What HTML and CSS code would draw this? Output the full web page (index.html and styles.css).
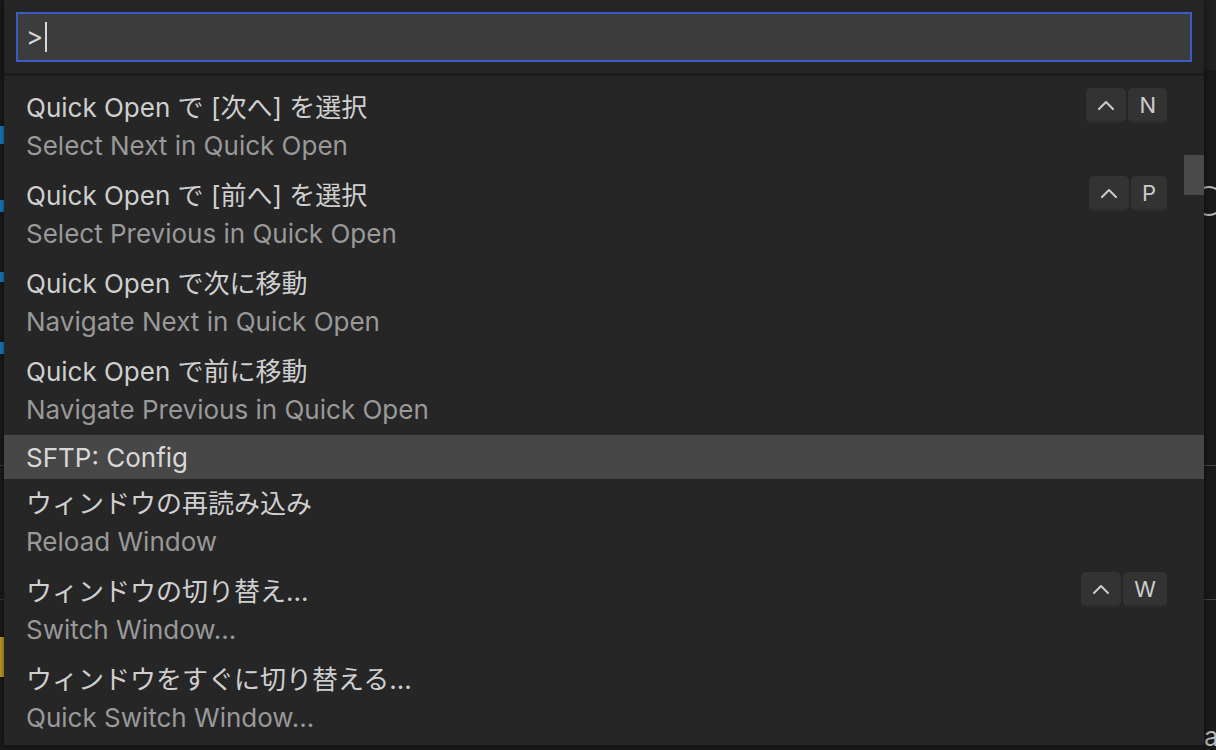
FILE: index.html
```html
<!DOCTYPE html>
<html lang="ja">
<head>
<meta charset="utf-8">
<title>Command Palette</title>
<link rel="stylesheet" href="styles.css">
</head>
<body>
<div class="workbench">
  <div class="editor-bg">
    <div class="deco deco-top"></div>
    <div class="deco mark m1"></div>
    <div class="deco mark m2"></div>
    <div class="deco mark m3"></div>
    <div class="deco mark m4"></div>
    <div class="deco rule r1"></div>
    <div class="deco rule r2"></div>
    <div class="deco rule r3"></div>
    <div class="deco rule r4"></div>
    <div class="deco yellow"></div>
    <div class="deco arc"></div>
    <div class="deco glyph-a">a</div>
  </div>

  <div class="quick-input">
    <div class="qi-header">
      <div class="qi-box">
        <span class="qi-value">&gt;</span><span class="qi-caret"></span>
      </div>
    </div>
    <div class="qi-list">
      <div class="qi-item">
        <div class="qi-row">
          <span class="qi-label">Quick Open で [次へ] を選択</span>
          <span class="qi-keys"><kbd class="key"><svg class="ctrl" viewBox="0 0 18 10"><polyline points="2,9 9,2 16,9"/></svg></kbd><kbd class="key">N</kbd></span>
        </div>
        <div class="qi-detail">Select Next in Quick Open</div>
      </div>
      <div class="qi-item">
        <div class="qi-row">
          <span class="qi-label">Quick Open で [前へ] を選択</span>
          <span class="qi-keys"><kbd class="key"><svg class="ctrl" viewBox="0 0 18 10"><polyline points="2,9 9,2 16,9"/></svg></kbd><kbd class="key">P</kbd></span>
        </div>
        <div class="qi-detail">Select Previous in Quick Open</div>
      </div>
      <div class="qi-item">
        <div class="qi-row">
          <span class="qi-label">Quick Open で次に移動</span>
        </div>
        <div class="qi-detail">Navigate Next in Quick Open</div>
      </div>
      <div class="qi-item">
        <div class="qi-row">
          <span class="qi-label">Quick Open で前に移動</span>
        </div>
        <div class="qi-detail">Navigate Previous in Quick Open</div>
      </div>
      <div class="qi-item single focused">
        <div class="qi-row">
          <span class="qi-label">SFTP: Config</span>
        </div>
      </div>
      <div class="qi-item">
        <div class="qi-row">
          <span class="qi-label">ウィンドウの再読み込み</span>
        </div>
        <div class="qi-detail">Reload Window</div>
      </div>
      <div class="qi-item">
        <div class="qi-row">
          <span class="qi-label">ウィンドウの切り替え...</span>
          <span class="qi-keys"><kbd class="key"><svg class="ctrl" viewBox="0 0 18 10"><polyline points="2,9 9,2 16,9"/></svg></kbd><kbd class="key">W</kbd></span>
        </div>
        <div class="qi-detail">Switch Window...</div>
      </div>
      <div class="qi-item">
        <div class="qi-row">
          <span class="qi-label">ウィンドウをすぐに切り替える...</span>
        </div>
        <div class="qi-detail">Quick Switch Window...</div>
      </div>
      <div class="qi-slider"></div>
    </div>
  </div>
</div>
</body>
</html>
```

FILE: styles.css
```css
* { box-sizing: border-box; }

html, body {
  margin: 0;
  padding: 0;
  width: 1216px;
  height: 750px;
  overflow: hidden;
  background: #1b1b1b;
  font-family: "Inter", "Noto Sans CJK JP", sans-serif;
}

.workbench {
  position: relative;
  width: 1216px;
  height: 750px;
}

.editor-bg {
  position: absolute;
  inset: 0;
  background: #1b1b1b;
}

.deco { position: absolute; }
.deco-top { left: 1204px; top: 0; width: 12px; height: 70px; background: #222222; }
.mark { left: 0; width: 4px; background: #1a7fc4; }
.m1 { top: 126px; height: 18px; }
.m2 { top: 200px; height: 12px; }
.m3 { top: 272px; height: 10px; }
.m4 { top: 342px; height: 12px; }
.rule { height: 1px; background: #3a3a3a; }
.r1 { left: 0; width: 4px; top: 465px; }
.r2 { left: 1204px; width: 12px; top: 465px; background: #454545; }
.r3 { left: 1204px; width: 12px; top: 599px; background: #454545; }
.r4 { left: 0; width: 4px; top: 599px; }
.yellow { left: 0; top: 637px; width: 4px; height: 40px; background: #c9a227; }
.arc {
  left: 1194px; top: 186px; width: 30px; height: 30px;
  border: 2px solid #bdbdbd; border-radius: 50%;
  clip-path: inset(0 0 0 10px);
}
.glyph-a {
  left: 1204px; top: 722px;
  color: #b8b8b8; font-size: 26px; line-height: 30px;
}

/* quick input overlay */
.quick-input {
  position: absolute;
  left: 4px;
  top: 0;
  width: 1200px;
  height: 745px;
  background: #262626;
  box-shadow: 0 0 8px rgba(0, 0, 0, 0.6);
  display: flex;
  flex-direction: column;
  overflow: hidden;
}

.qi-header {
  height: 74px;
  padding: 12px 12px 0 12px;
  background: #252525;
  border-bottom: 1px solid #1e1e1e;
  box-shadow: 0 1px 2px rgba(0, 0, 0, 0.5);
  position: relative;
  z-index: 1;
}

.qi-box {
  height: 50px;
  width: 1176px;
  border: 2px solid #3a5cc2;
  background: #3c3c3c;
  display: flex;
  align-items: center;
  padding-left: 8px;
}

.qi-value {
  color: #d4d4d4;
  font-size: 26px;
  line-height: 30px;
}

.qi-caret {
  width: 2px;
  height: 30px;
  background: #d8d8d8;
  margin-left: 2px;
}

.qi-list {
  position: relative;
  flex: 1;
  padding-top: 9px;
}

.qi-item {
  width: 1180px;
  padding: 0 17px 6px 22px;
}

.qi-item.single { padding-bottom: 0; }
.qi-item.focused { background: #474747; width: 1200px; }
.qi-item.focused .qi-label { color: #d8d8d8; }

.qi-row {
  height: 44px;
  display: flex;
  align-items: center;
  justify-content: space-between;
}

.qi-label {
  color: #cfcfcf;
  font-size: 26px;
  white-space: nowrap;
}

.qi-detail {
  height: 38px;
  line-height: 38px;
  color: #999999;
  font-size: 26px;
  white-space: nowrap;
}

.qi-keys {
  display: flex;
  gap: 2px;
}

.key {
  height: 35px;
  min-width: 36px;
  padding: 0 11px;
  display: flex;
  align-items: center;
  justify-content: center;
  background: #333333;
  border-radius: 5px;
  border-bottom: 2px solid #2d2d2d;
  color: #cccccc;
  font-family: "Inter", sans-serif;
  font-size: 22px;
  font-style: normal;
  padding-top: 2px;
}

.ctrl {
  width: 18px;
  height: 10px;
  fill: none;
  stroke: #cccccc;
  stroke-width: 2;
  stroke-linecap: round;
  stroke-linejoin: round;
}

.qi-slider {
  position: absolute;
  right: 0;
  top: 81px;
  width: 20px;
  height: 40px;
  background: #4a4a4a;
}
```
